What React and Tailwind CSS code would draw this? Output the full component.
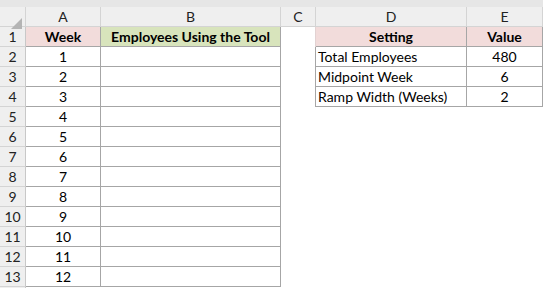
import React from 'react';

const weeks = [1, 2, 3, 4, 5, 6, 7, 8, 9, 10, 11, 12];

const settings = [
  { name: 'Total Employees', value: '480' },
  { name: 'Midpoint Week', value: '6' },
  { name: 'Ramp Width (Weeks)', value: '2' },
];

function RowHead({ n }) {
  return (
    <div className="w-[26px] h-full bg-[#efefef] border-r border-b border-r-[#c8c8c8] border-b-[#d4d4d4] flex items-center justify-center pt-[1px] text-[#222]">
      {n}
    </div>
  );
}

function Row({ n, label, a, b, d, e, header }) {
  const tableA = n <= 13;
  const tableD = n <= 4;
  const line = 'border-[#a6a6a6]';
  return (
    <div className="flex h-[20px]">
      <RowHead n={label} />
      <div
        className={
          'w-[75px] h-full flex items-center justify-center pt-[1px] ' +
          (tableA ? 'border-r border-b ' + line : '') +
          (header ? ' bg-[#f2dcdb] font-bold' : '')
        }
      >
        {a}
      </div>
      <div
        className={
          'w-[180px] h-full flex items-center justify-center pt-[1px] ' +
          (tableA ? 'border-r border-b ' + line : '') +
          (header ? ' bg-[#d8e4bc] font-bold' : '')
        }
      >
        {b}
      </div>
      <div
        className={
          'w-[35px] h-full ' +
          (tableD ? 'border-r ' + (header ? 'border-[#e2d2d2]' : line) : '') +
          (tableA ? '' : ' ml-[1px]')
        }
      />
      <div
        className={
          'w-[151px] h-full flex items-center pt-[1px] ' +
          (tableD ? 'border-r border-b ' + line : '') +
          (header ? ' bg-[#f2dcdb] font-bold justify-center' : ' pl-[2px]')
        }
      >
        {d}
      </div>
      <div
        className={
          'w-[76px] h-full flex items-center justify-center pt-[1px] ' +
          (tableD ? 'border-r border-b ' + line : '') +
          (header ? ' bg-[#f2dcdb] font-bold' : '')
        }
      >
        {e}
      </div>
    </div>
  );
}

export default function App() {
  const cols = [
    { k: 'A', w: 'w-[75px]' },
    { k: 'B', w: 'w-[180px]' },
    { k: 'C', w: 'w-[35px]' },
    { k: 'D', w: 'w-[151px]' },
    { k: 'E', w: 'w-[76px]' },
  ];

  return (
    <div
      className="w-[543px] h-[288px] overflow-hidden bg-white text-[14px] leading-none text-black"
      style={{ fontFamily: 'Lato, "Open Sans", sans-serif' }}
    >
      <div className="h-[7px] bg-[#e6e6e6]" />
      <div className="flex h-[20px] bg-[#efefef] text-[#222]">
        <div className="w-[26px] h-full border-r border-b border-[#d4d4d4] relative">
          <div className="absolute left-[11px] top-[11px] w-0 h-0 border-l-[11px] border-l-transparent border-b-[11px] border-b-[#b4b4b4]" />
        </div>
        {cols.map((c) => (
          <div
            key={c.k}
            className={c.w + ' h-full border-r border-b border-[#d4d4d4] flex items-center justify-center pt-[1px]'}
          >
            {c.k}
          </div>
        ))}
      </div>

      <Row n={1} label={1} header a="Week" b="Employees Using the Tool" d="Setting" e="Value" />
      {weeks.map((w, i) => {
        const s = settings[i];
        return (
          <Row
            key={w}
            n={w + 1}
            label={w + 1}
            a={w}
            b=""
            d={s ? s.name : ''}
            e={s ? s.value : ''}
          />
        );
      })}
      <Row n={14} label="" a="" b="" d="" e="" />
    </div>
  );
}
